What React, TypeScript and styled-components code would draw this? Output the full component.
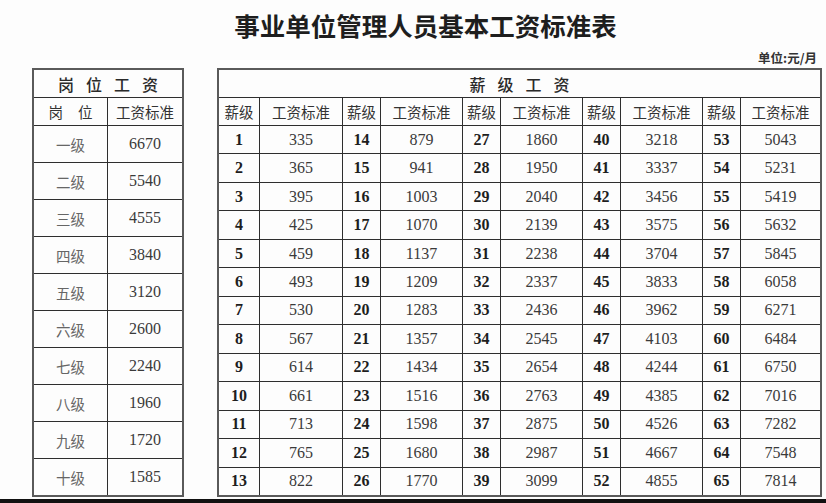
import React from "react";
import styled, { createGlobalStyle } from "styled-components";

const GlobalStyle = createGlobalStyle`
	html, body {
		margin: 0;
		padding: 0;
		background: #ffffff;
	}
`;

const levels = [
	{ name: "一级", pay: 6670 },
	{ name: "二级", pay: 5540 },
	{ name: "三级", pay: 4555 },
	{ name: "四级", pay: 3840 },
	{ name: "五级", pay: 3120 },
	{ name: "六级", pay: 2600 },
	{ name: "七级", pay: 2240 },
	{ name: "八级", pay: 1960 },
	{ name: "九级", pay: 1720 },
	{ name: "十级", pay: 1585 },
];

const grades = [
	335, 365, 395, 425, 459, 493, 530, 567, 614, 661, 713, 765, 822,
	879, 941, 1003, 1070, 1137, 1209, 1283, 1357, 1434, 1516, 1598, 1680, 1770,
	1860, 1950, 2040, 2139, 2238, 2337, 2436, 2545, 2654, 2763, 2875, 2987, 3099,
	3218, 3337, 3456, 3575, 3704, 3833, 3962, 4103, 4244, 4385, 4526, 4667, 4855,
	5043, 5231, 5419, 5632, 5845, 6058, 6271, 6484, 6750, 7016, 7282, 7548, 7814,
];

const ROWS = 13;
const GROUPS = 5;

const App = () => {
	const rows = Array.from({ length: ROWS }, (_, r) =>
		Array.from({ length: GROUPS }, (_, g) => ({
			grade: g * ROWS + r + 1,
			pay: grades[g * ROWS + r],
		}))
	);

	return (
		<Page>
			<GlobalStyle />
			<Title>事业单位管理人员基本工资标准表</Title>
			<Unit>单位:元/月</Unit>
			<Tables>
				<PostTable>
					<Caption>岗位工资</Caption>
					<HeadCell spaced>岗位</HeadCell>
					<HeadCell>工资标准</HeadCell>
					{levels.map((l) => (
						<React.Fragment key={l.name}>
							<LevelCell>{l.name}</LevelCell>
							<NumCell>{l.pay}</NumCell>
						</React.Fragment>
					))}
				</PostTable>

				<GradeTable>
					<Caption>薪级工资</Caption>
					{Array.from({ length: GROUPS }, (_, g) => (
						<React.Fragment key={g}>
							<HeadCell>薪级</HeadCell>
							<HeadCell>工资标准</HeadCell>
						</React.Fragment>
					))}
					{rows.map((row, r) =>
						row.map((c) => (
							<React.Fragment key={`${r}-${c.grade}`}>
								<NumCell bold>{c.grade}</NumCell>
								<NumCell>{c.pay}</NumCell>
							</React.Fragment>
						))
					)}
				</GradeTable>
			</Tables>
			<BottomBar />
		</Page>
	);
};

export default App;

const Page = styled.div`
	width: 826px;
	height: 503px;
	display: flex;
	flex-direction: column;
	background: #fdfdfd;
	overflow: hidden;
`;

const Title = styled.div`
	padding: 10px 0 0 25px;
	height: 38px;
	line-height: 30px;
	text-align: center;
	font-family: "Noto Sans CJK SC", sans-serif;
	font-weight: 700;
	font-size: 25.5px;
	color: #1e1e1e;
`;

const Unit = styled.div`
	height: 20px;
	line-height: 20px;
	padding-right: 9px;
	text-align: right;
	font-family: "Noto Sans CJK SC", sans-serif;
	font-weight: 700;
	font-size: 12.5px;
	color: #333;
`;

const Tables = styled.div`
	display: flex;
	gap: 33px;
	padding-left: 32px;
	height: 429px;
`;

const Grid = styled.div`
	display: grid;
	gap: 1px;
	box-sizing: border-box;
	height: 429px;
	border: 2px solid #5a5a5a;
	background: #2e2e2e;
`;

const PostTable = styled(Grid)`
	width: 152px;
	grid-template-columns: 73px 1fr;
	grid-template-rows: 27px 27px repeat(10, 1fr);
`;

const GradeTable = styled(Grid)`
	width: 605px;
	grid-template-columns: 40px 82px 37px 81px 37px 81px 37px 81px 37px 1fr;
	grid-template-rows: 27px 27px repeat(13, 1fr);
`;

const Cell = styled.div`
	display: flex;
	align-items: center;
	justify-content: center;
	background: #fdfdfd;
	white-space: nowrap;
`;

const Caption = styled(Cell)`
	grid-column: 1 / -1;
	padding-left: 12px;
	letter-spacing: 12px;
	font-family: "Noto Sans CJK SC", sans-serif;
	font-size: 16px;
	font-weight: 500;
	color: #2a2a2a;
`;

const HeadCell = styled(Cell)<{ spaced?: boolean }>`
	font-family: "Noto Sans CJK SC", sans-serif;
	font-size: 14.5px;
	color: #333;
	letter-spacing: ${({ spaced }) => (spaced ? "15px" : "0")};
	padding-left: ${({ spaced }) => (spaced ? "15px" : "0")};
`;

const LevelCell = styled(Cell)`
	font-family: "Noto Sans CJK SC", sans-serif;
	font-size: 14.5px;
	color: #666;
`;

const NumCell = styled(Cell)<{ bold?: boolean }>`
	font-family: "Liberation Serif", serif;
	font-size: 16px;
	font-weight: ${({ bold }) => (bold ? 700 : 400)};
	color: ${({ bold }) => (bold ? "#1e1e1e" : "#3a3a3a")};
`;

const BottomBar = styled.div`
	margin-top: 2px;
	height: 4px;
	background: #111;
`;
